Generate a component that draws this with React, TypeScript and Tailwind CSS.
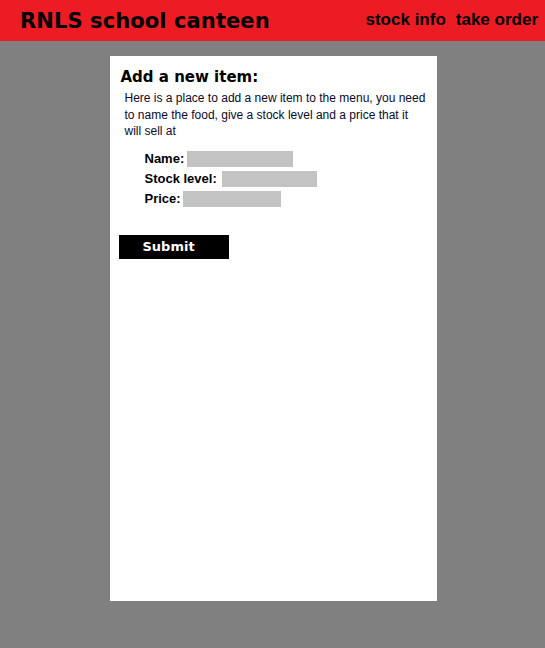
export default function App() {
  return (
    <div className="min-h-[648px] bg-[#808080] font-['Liberation_Sans',sans-serif]">
      {/* Header */}
      <header className="h-[41px] bg-[#ed1c24] flex items-center justify-between pl-5 pr-[7px]">
        <h1 className="text-[21px] font-bold tracking-[0.1px] text-black font-['DejaVu_Sans',sans-serif] leading-none mt-[2px]">
          RNLS school canteen
        </h1>
        <nav className="flex gap-[10px] text-[17px] font-bold text-black -mt-[2px]">
          <a>stock info</a>
          <a>take order</a>
        </nav>
      </header>

      {/* Panel */}
      <main className="flex justify-center pt-[15px] pb-[47px]">
        <div className="ml-[1px] w-[327px] h-[545px] bg-white pl-[10px] pt-[14px]">
          <h2 className="ml-[1px] text-[15px] font-bold text-black font-['DejaVu_Sans',sans-serif] leading-none">
            Add a new item:
          </h2>
          <p className="mt-[5px] ml-[5px] w-[301px] text-[12px] leading-[16.5px] text-[#0a0a2a]">
            Here is a place to add a new item to the menu, you need to name the food, give a stock level and a price that it will sell at
          </p>

          <form className="mt-[11px] ml-[25px] flex flex-col gap-[4px] text-[13px] leading-[16px] font-bold text-black">
            <div className="flex items-center gap-[3px]">
              <span>Name:</span>
              <div className="w-[106px] h-[16px] bg-[#c3c3c3]" />
            </div>
            <div className="flex items-center gap-[5px]">
              <span>Stock level:</span>
              <div className="w-[95px] h-[16px] bg-[#c3c3c3]" />
            </div>
            <div className="flex items-center gap-[2px]">
              <span>Price:</span>
              <div className="w-[98px] h-[16px] bg-[#c3c3c3]" />
            </div>
          </form>

          <button className="block mt-[28px] -ml-[1px] w-[110px] h-[24px] bg-black text-white text-[13px] font-bold font-['DejaVu_Sans',sans-serif] text-left pl-[24px]">
            Submit
          </button>
        </div>
      </main>
    </div>
  );
}
